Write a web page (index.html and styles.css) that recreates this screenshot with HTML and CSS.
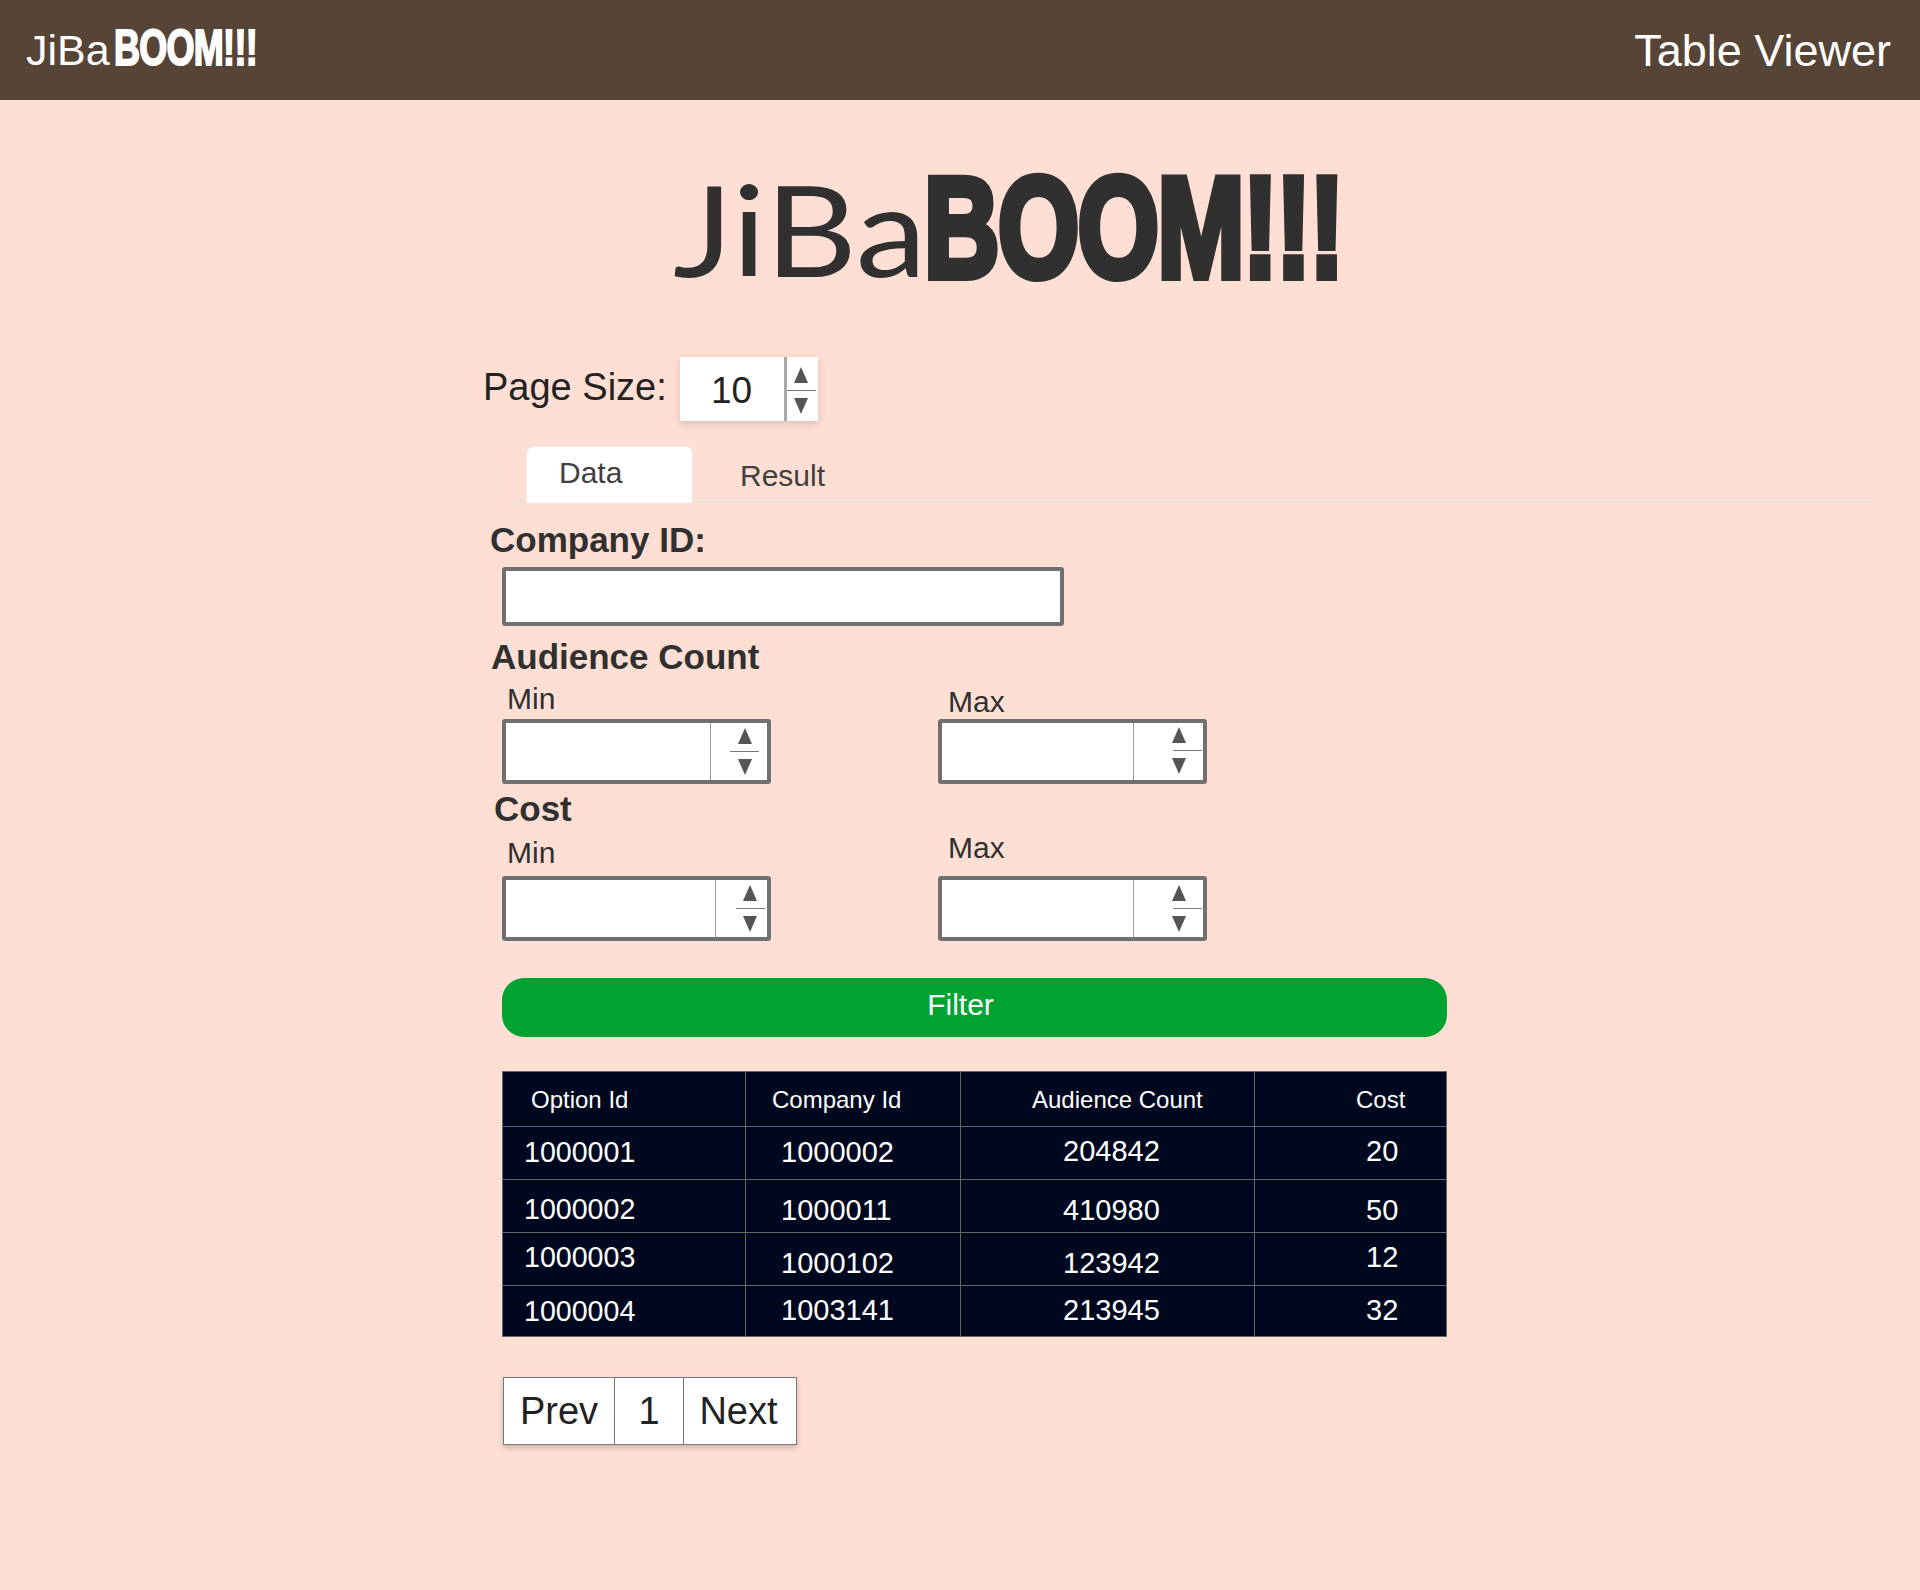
FILE: index.html
```html
<!DOCTYPE html>
<html lang="en">
<head>
    <meta charset="UTF-8">
    <meta name="viewport" content="width=device-width, initial-scale=1.0">
    <title>Table Viewer</title>
    <link rel="stylesheet" href="styles.css">
</head>
<body>
    <!-- top bar -->
    <header class="topbar">
        <div class="brand">JiBa<span class="brand-boom">BOOM!!!</span></div>
        <div class="topbar-title">Table Viewer</div>
    </header>

    <div class="logo">
        <span class="logo-thin">JiBa</span><span class="logo-boom">BOOM!!!</span>
    </div>

    <main class="content">
        <div class="page-size">
            <label class="page-size-label">Page Size:</label>
            <div class="page-size-box">
                <div class="page-size-value">10</div>
                <div class="page-spin">
                    <span class="arrow-up"></span>
                    <span class="spin-line"></span>
                    <span class="arrow-down"></span>
                </div>
            </div>
        </div>

        <div class="tabs">
            <div class="tab tab-active">Data</div>
            <div class="tab">Result</div>
        </div>

        <div class="form">
            <div class="heading heading-company">Company ID:</div>
            <input class="text-input" type="text">

            <div class="heading heading-audience">Audience Count</div>
            <div class="range range-audience">
                <div class="field">
                    <div class="field-label field-min">Min</div>
                    <div class="num-input">
                        <div class="num-value num-wide"></div>
                        <div class="spin">
                            <span class="arrow-up"></span>
                            <span class="spin-line"></span>
                            <span class="arrow-down"></span>
                        </div>
                    </div>
                </div>
                <div class="field">
                    <div class="field-label field-max">Max</div>
                    <div class="num-input">
                        <div class="num-value"></div>
                        <div class="spin spin-end">
                            <span class="arrow-up"></span>
                            <span class="spin-line"></span>
                            <span class="arrow-down"></span>
                        </div>
                    </div>
                </div>
            </div>

            <div class="heading heading-cost">Cost</div>
            <div class="range range-cost">
                <div class="field">
                    <div class="field-label field-min">Min</div>
                    <div class="num-input">
                        <div class="num-value num-wider"></div>
                        <div class="spin spin-narrow">
                            <span class="arrow-up"></span>
                            <span class="spin-line"></span>
                            <span class="arrow-down"></span>
                        </div>
                    </div>
                </div>
                <div class="field">
                    <div class="field-label field-max">Max</div>
                    <div class="num-input">
                        <div class="num-value"></div>
                        <div class="spin spin-end">
                            <span class="arrow-up"></span>
                            <span class="spin-line"></span>
                            <span class="arrow-down"></span>
                        </div>
                    </div>
                </div>
            </div>

            <button class="filter-btn">Filter</button>

            <table class="data-table">
                <colgroup>
                    <col class="col-option">
                    <col class="col-company">
                    <col class="col-audience">
                    <col class="col-cost">
                </colgroup>
                <thead>
                    <tr>
                        <th class="h1">Option Id</th>
                        <th class="h2">Company Id</th>
                        <th class="h3">Audience Count</th>
                        <th class="h4">Cost</th>
                    </tr>
                </thead>
                <tbody>
                    <tr class="row-1">
                        <td class="c1">1000001</td>
                        <td class="c2">1000002</td>
                        <td class="c3">204842</td>
                        <td class="c4">20</td>
                    </tr>
                    <tr class="row-2">
                        <td class="c1">1000002</td>
                        <td class="c2">1000011</td>
                        <td class="c3">410980</td>
                        <td class="c4">50</td>
                    </tr>
                    <tr class="row-3">
                        <td class="c1">1000003</td>
                        <td class="c2">1000102</td>
                        <td class="c3">123942</td>
                        <td class="c4">12</td>
                    </tr>
                    <tr class="row-4">
                        <td class="c1">1000004</td>
                        <td class="c2">1003141</td>
                        <td class="c3">213945</td>
                        <td class="c4">32</td>
                    </tr>
                </tbody>
            </table>

            <div class="pager">
                <div class="pager-item pager-prev">Prev</div>
                <div class="pager-item pager-num">1</div>
                <div class="pager-item pager-next">Next</div>
            </div>
        </div>
    </main>
</body>
</html>
```

FILE: styles.css
```css
*{
    margin: 0;
    padding: 0;
    box-sizing: border-box;
}
body{
    height: 1590px;
    background-color: #ffdfd3;
    font-family: "Liberation Sans", Arial, sans-serif;
    color: #303030;
    overflow: hidden;
}

/* top bar */
.topbar{
    display: flex;
    justify-content: space-between;
    align-items: center;
    height: 100px;
    padding: 0 29px 0 26px;
    background-color: #564537;
    color: #fff;
}
.brand{
    font-size: 43px;
    margin-top: -5px;
    display: flex;
    align-items: baseline;
    white-space: nowrap;
}
/* no Impact here, so squeeze a stroked bold */
.brand-boom{
    display: inline-block;
    font-weight: bold;
    font-size: 50px;
    letter-spacing: -1px;
    -webkit-text-stroke: 2px #fff;
    margin-left: 4px;
    transform: scaleX(0.72);
    transform-origin: left center;
}
.topbar-title{
    font-size: 45px;
    margin-top: 2px;
}

/* big logo */
.logo{
    display: flex;
    align-items: baseline;
    height: 257px;
    padding: 53px 0 0 673px;
    color: #303030;
    white-space: nowrap;
}
.logo-thin{
    display: inline-block;
    font-family: Lato, sans-serif;
    font-weight: 400;
    font-size: 127px;
    line-height: 150px;
    width: 251px;
    transform: scaleX(1.12);
    transform-origin: left center;
}
.logo-boom{
    display: inline-block;
    font-weight: bold;
    font-size: 143px;
    line-height: 150px;
    letter-spacing: -2px;
    -webkit-text-stroke: 8px #303030;
    transform: scaleX(0.73);
    transform-origin: left center;
}

/* page size */
.content{
    margin-left: 484px;
}
.page-size{
    display: flex;
    align-items: center;
    height: 64px;
}
.page-size-label{
    width: 196px;
    font-size: 38px;
    color: #222;
    margin: -3px 0 0 -1px;
}
.page-size-box{
    display: flex;
    width: 138px;
    height: 64px;
    margin-left: 1px;
    background-color: #fff;
    box-shadow: 0 3px 8px rgba(0, 0, 0, 0.15);
}
.page-size-value{
    width: 107px;
    padding-left: 31px;
    border-right: 3px solid #aaa;
    font-size: 37px;
    line-height: 68px;
    color: #222;
}
.page-spin{
    display: flex;
    flex-direction: column;
    align-items: center;
    width: 31px;
    padding: 10px 3px 0 0;
}
.arrow-up, .arrow-down{
    display: block;
    width: 0;
    height: 0;
    border-left: 7.5px solid transparent;
    border-right: 7.5px solid transparent;
}
.arrow-up{
    border-bottom: 16px solid #555;
}
.arrow-down{
    border-top: 16px solid #555;
}
.spin-line{
    display: block;
    flex: none;
    width: 29px;
    height: 1px;
    margin: 7px 0;
    background-color: #777;
}

/* tabs */
.tabs{
    display: flex;
    width: 1359px;
    height: 57px;
    margin: 25px 0 0 32px;
    padding-left: 10px;
    border-bottom: 2px solid #e8e1dc;
}
.tab{
    width: 167px;
    height: 57px;
    padding: 8px 0 0 32px;
    font-size: 30px;
    line-height: 36px;
    color: #404040;
}
.tab-active{
    background-color: #fff;
    border: 1px solid #efe9e6;
    border-bottom: none;
    border-radius: 8px 8px 0 0;
}
.tab + .tab{
    width: auto;
    padding: 12px 0 0 47px;
}

/* form */
.form{
    padding-left: 18px;
}
.heading{
    font-size: 35px;
    font-weight: bold;
    line-height: 40px;
    color: #303030;
}
.heading-company{
    margin: 17px 0 7px -12px;
}
.heading-audience{
    margin: 11px 0 0 -11px;
}
.heading-cost{
    margin: 5px 0 0 -8px;
}
.text-input{
    display: block;
    width: 562px;
    height: 59px;
    border: 4px solid #707070;
    border-radius: 3px;
    background-color: #fff;
    outline: none;
}
.range{
    display: flex;
    gap: 167px;
}
.field{
    width: 269px;
}
.field-label{
    font-size: 30px;
    line-height: 34px;
    color: #303030;
}
.field-min{
    padding-left: 5px;
}
.field-max{
    padding-left: 10px;
}
.range-audience .field-label{
    height: 42px;
}
.range-audience .field-min{
    padding-top: 5px;
}
.range-audience .field-max{
    padding-top: 8px;
}
.range-cost .field-label{
    height: 47px;
}
.range-cost .field-min{
    padding-top: 7px;
}
.range-cost .field-max{
    padding-top: 2px;
}
.num-input{
    display: flex;
    height: 65px;
    border: 4px solid #707070;
    border-radius: 3px;
    background-color: #fff;
}
.num-value{
    width: 192px;
    border-right: 1px solid #999;
}
.num-wide{
    width: 205px;
}
.num-wider{
    width: 210px;
}
.spin{
    display: flex;
    flex-direction: column;
    align-items: center;
    flex: 1;
    padding: 5px 0 0 11px;
}
.spin-narrow{
    padding-left: 17px;
}
.spin-end{
    padding-left: 21px;
}
.range-audience .spin-end{
    padding-top: 4px;
}
.spin-end .spin-line{
    margin-left: 17px;
}
.filter-btn{
    display: block;
    width: 945px;
    height: 59px;
    margin-top: 37px;
    padding-bottom: 6px;
    border: none;
    border-radius: 22px;
    background-color: #00a332;
    color: #fff;
    font-family: inherit;
    font-size: 30px;
    text-indent: -28px;
}

/* table */
.data-table{
    width: 944px;
    margin-top: 34px;
    border-collapse: collapse;
    table-layout: fixed;
    background-color: #000820;
    color: #fff;
}
.col-option{
    width: 243px;
}
.col-company{
    width: 215px;
}
.col-audience{
    width: 294px;
}
.col-cost{
    width: 192px;
}
.data-table th, .data-table td{
    border: 1px solid #666;
    text-align: left;
    font-weight: normal;
    line-height: 32px;
}
.data-table th{
    height: 55px;
    font-size: 24px;
    padding-top: 2px;
}
.data-table td{
    height: 53px;
    font-size: 29px;
}
.data-table .row-4 td{
    height: 51px;
}
.data-table .c1{
    font-size: 28.6px;
}
.h1{ padding-left: 28px; }
.h2{ padding-left: 26px; }
.h3{ padding-left: 71px; }
.h4{ padding-left: 101px; }
.c1{ padding-left: 21px; }
.c2{ padding-left: 35px; }
.c3{ padding-left: 102px; }
.c4{ padding-left: 111px; }
.row-1 td{ padding-bottom: 2px; }
.row-1 .c3, .row-1 .c4{ padding-bottom: 5px; }
.row-2 td{ padding-top: 8px; }
.row-2 .c1{ padding-top: 5px; }
.row-3 .c2, .row-3 .c3{ padding-top: 8px; }
.row-3 .c1, .row-3 .c4{ padding-bottom: 4px; }
.row-4 .c2, .row-4 .c3, .row-4 .c4{ padding-bottom: 2px; }

/* pager */
.pager{
    display: flex;
    width: 294px;
    height: 68px;
    margin: 40px 0 0 1px;
    background-color: #fff;
    border: 1px solid #777;
    box-shadow: 0 3px 6px rgba(0, 0, 0, 0.2);
    font-size: 38px;
    line-height: 66px;
    color: #222;
}
.pager-item{
    text-align: center;
    border-right: 1px solid #777;
}
.pager-prev{
    width: 111px;
}
.pager-num{
    width: 69px;
}
.pager-next{
    flex: 1;
    border-right: none;
    padding-right: 3px;
}
```
